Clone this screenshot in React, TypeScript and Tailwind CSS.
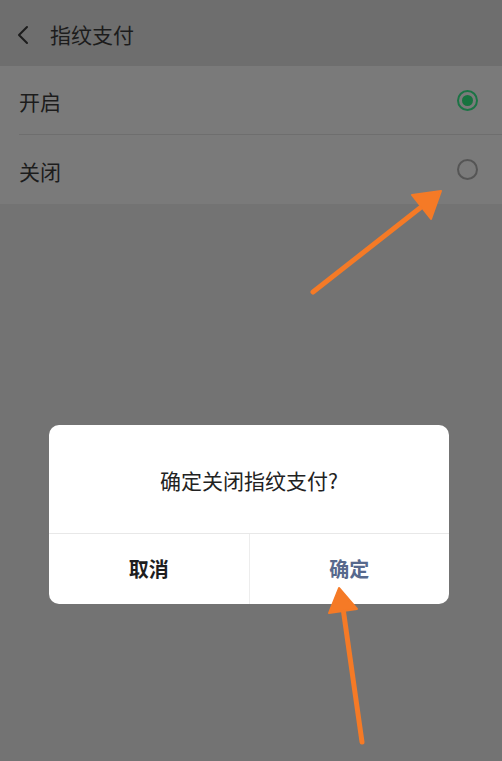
const cjk = "font-['Noto_Sans_CJK_SC',sans-serif]"

function Radio({ checked }: { checked: boolean }) {
  return checked ? (
    <span className="flex h-[21px] w-[21px] items-center justify-center rounded-full border-2 border-[#1b7445]">
      <span className="h-[11px] w-[11px] rounded-full bg-[#17733f]" />
    </span>
  ) : (
    <span className="h-[21px] w-[21px] rounded-full border-2 border-[#555]" />
  )
}

function Row({ label, checked, last }: { label: string; checked: boolean; last?: boolean }) {
  return (
    <div className="flex h-[69px] items-center pl-[19px]">
      <div className={`flex h-full flex-1 items-center justify-between pr-[24px] ${last ? '' : 'border-b border-[#6e6e6e]'}`}>
        <span className="pt-[4px] text-[21px] text-[#1c1c1c]">{label}</span>
        <Radio checked={checked} />
      </div>
    </div>
  )
}

function Arrows() {
  return (
    <svg className="pointer-events-none absolute inset-0" width="502" height="761" viewBox="0 0 502 761">
      <g fill="#f57a26" stroke="#f57a26" strokeLinejoin="round">
        {/* arrow towards the off radio */}
        <line x1="313" y1="292" x2="420" y2="208" strokeWidth="5" strokeLinecap="round" />
        <polygon points="441,191 412,195 431,219" strokeWidth="2" />
        {/* arrow towards the confirm button */}
        <line x1="362" y1="742" x2="343" y2="608" strokeWidth="5" strokeLinecap="round" />
        <polygon points="339,588 329,613 357,609" strokeWidth="2" />
      </g>
    </svg>
  )
}

export default function App() {
  return (
    <div className={`relative h-[761px] w-full overflow-hidden bg-[#737373] ${cjk}`}>
      <header className="flex h-[66px] items-center bg-[#6e6e6e] pt-[4px]">
        <svg className="ml-[16px]" width="14" height="20" viewBox="0 0 14 20" fill="none">
          <path d="M11 2 L3 10 L11 18" stroke="#1c1c1c" strokeWidth="2" strokeLinecap="round" strokeLinejoin="round" />
        </svg>
        <h1 className="ml-[20px] text-[21px] text-[#1c1c1c]">指纹支付</h1>
      </header>
      <div className="bg-[#7a7a7a]">
        <Row label="开启" checked />
        <Row label="关闭" checked={false} last />
      </div>

      <div className="ml-[49px] mt-[221px] w-[400px] overflow-hidden rounded-[10px] bg-white">
        <p className="flex h-[108px] items-center justify-center pt-[3px] text-[21px] text-[#222]">确定关闭指纹支付?</p>
        <div className="flex h-[71px] border-t border-[#e8e8e8]">
          <button className="flex-1 text-[20px] font-bold text-[#1e1e1e]">取消</button>
          <button className="flex-1 border-l border-[#ededed] text-[20px] font-bold text-[#57698d]">确定</button>
        </div>
      </div>

      <Arrows />
    </div>
  )
}
